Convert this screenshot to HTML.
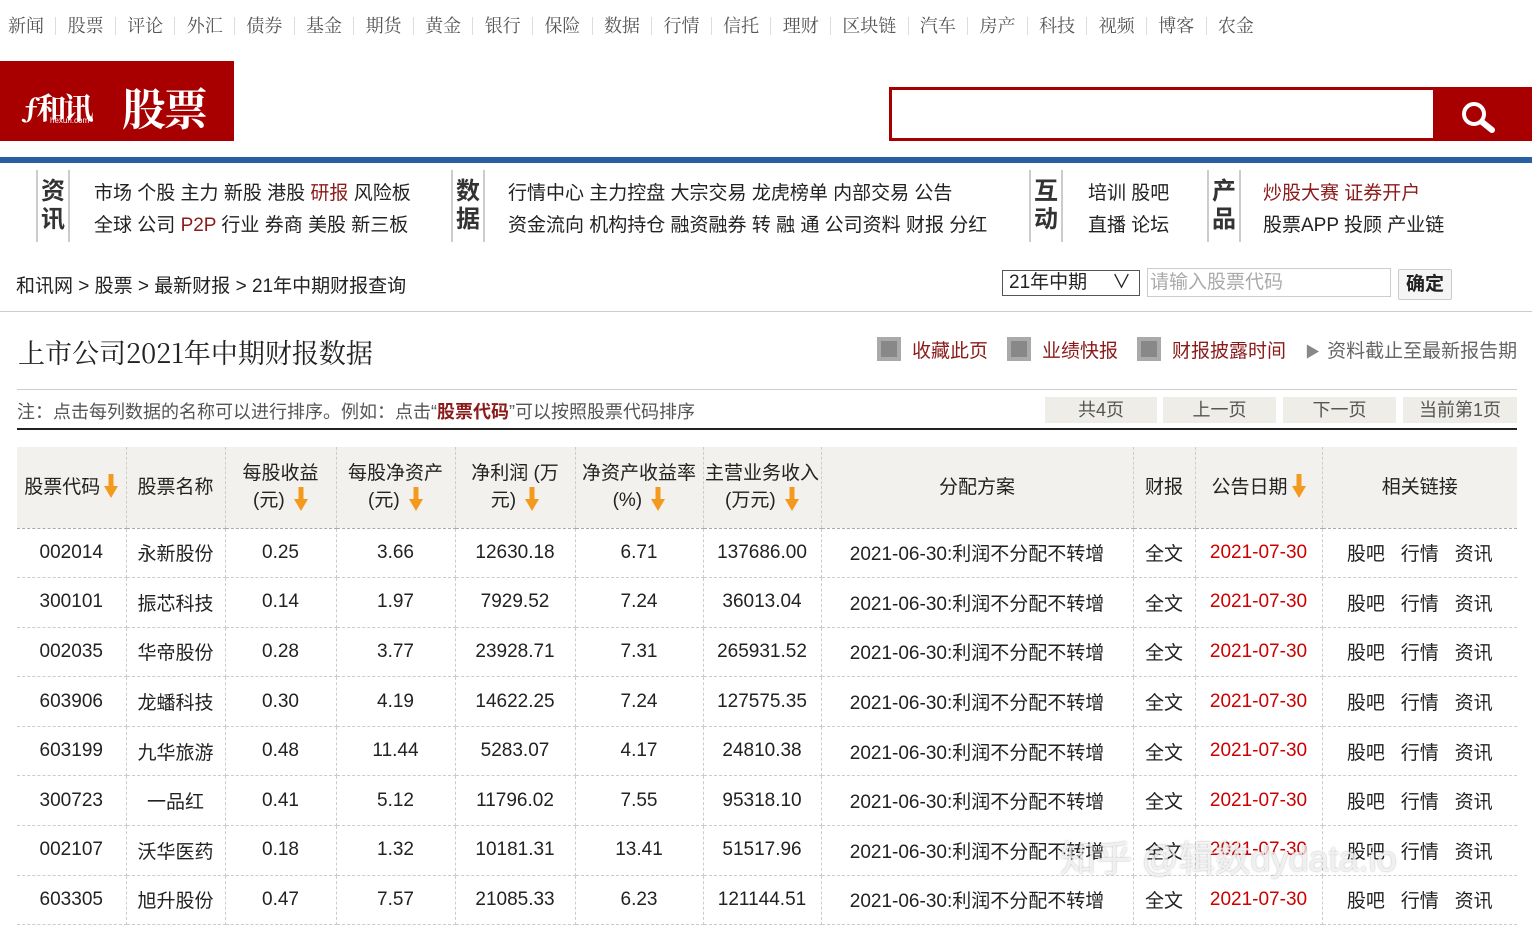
<!DOCTYPE html>
<html><head><meta charset="utf-8"><style>
*{margin:0;padding:0;box-sizing:border-box}
body{width:1532px;height:924px;overflow:hidden;background:#fff;font-family:"Liberation Sans","Noto Sans CJK SC",sans-serif;color:#222;position:relative}
.a{position:absolute;white-space:nowrap}
.nav{top:14px;left:8px;font-family:"Liberation Serif","Noto Serif CJK SC",serif;font-size:18px;color:#555;line-height:24px}
.nav span{display:inline-block}
.nav i{display:inline-block;width:1px;height:18px;background:#ddd;margin:0 11.3px;vertical-align:-3px}
.sec{font-size:19px;line-height:32px;color:#222}
.lab{font-size:24px;font-weight:bold;line-height:28px;color:#333;width:34px;text-align:center;border-left:2px solid #ccc;border-right:2px solid #ccc;height:72px;padding-top:8px}
.red{color:#8b1a1a}
table{border-collapse:collapse;position:absolute;left:17px;top:447px;width:1500px;font-size:19px}
td{border:1px dashed #ccc;text-align:center;height:49.6px;padding:0}
tr:first-child td{border-top:none}
td:first-child{border-left:none}td:last-child{border-right:none}
th{background:#f3f1ed;font-weight:normal;height:81px;border-left:1px dashed #ccc;border-bottom:1px dashed #aaa;line-height:27px;color:#222;font-size:19px}
th:first-child{border-left:none}
.ar{display:inline-block;width:14px;height:24px;vertical-align:-5px;margin-left:4px}
.dt{color:#c00}
.pg{background:#efede8;color:#555;font-size:18px;height:26px;line-height:26px;text-align:center;top:397px}
.ic{display:inline-block;width:24px;height:24px;background:#888;border:4px solid #aaa;vertical-align:-4px;margin-right:11px}
</style></head><body>
<svg width="0" height="0" style="position:absolute"><defs><symbol id="ar" viewBox="0 0 14 24"><rect x="4.5" y="0" width="5" height="14" fill="#f39a1e"/><path d="M0 12 L14 12 L7 24 Z" fill="#f39a1e"/></symbol></defs></svg>
<div class="a nav"><span>新闻</span><i></i><span>股票</span><i></i><span>评论</span><i></i><span>外汇</span><i></i><span>债券</span><i></i><span>基金</span><i></i><span>期货</span><i></i><span>黄金</span><i></i><span>银行</span><i></i><span>保险</span><i></i><span>数据</span><i></i><span>行情</span><i></i><span>信托</span><i></i><span>理财</span><i></i><span>区块链</span><i></i><span>汽车</span><i></i><span>房产</span><i></i><span>科技</span><i></i><span>视频</span><i></i><span>博客</span><i></i><span>农金</span></div>
<div class="a" style="left:0;top:61px;width:234px;height:80px;background:#a80000"></div>
<div class="a" style="left:22px;top:84px;color:#fff;font-size:30px;font-weight:bold;font-family:'Noto Serif CJK SC',serif;letter-spacing:-3px">ƒ和讯</div>
<div class="a" style="left:50px;top:116px;color:#fff;font-size:8px">hexun.com</div>
<div class="a" style="left:122px;top:74px;color:#fff;font-size:44px;font-weight:bold;font-family:'Noto Serif CJK SC',serif;letter-spacing:-2px">股票</div>
<div class="a" style="left:889px;top:87px;width:643px;height:54px;border:3px solid #a80000;border-right:none"></div>
<div class="a" style="left:1433px;top:87px;width:99px;height:54px;background:#a80000;border-radius:2px"></div>
<svg class="a" style="left:1460px;top:100px" width="44" height="36"><circle cx="14" cy="14" r="10" stroke="#fff" stroke-width="4" fill="none"/><line x1="22" y1="22" x2="32" y2="30" stroke="#fff" stroke-width="6" stroke-linecap="round"/></svg>
<div class="a" style="left:0;top:157px;width:1532px;height:6px;background:#2a5fa5"></div>
<div class="a lab" style="left:36px;top:170px">资<br>讯</div>
<div class="a sec" style="left:94px;top:178px">市场 个股 主力 新股 港股 <span class="red">研报</span> 风险板<br>全球 公司 <span class="red">P2P</span> 行业 券商 美股 新三板</div>
<div class="a lab" style="left:451px;top:170px">数<br>据</div>
<div class="a sec" style="left:508px;top:178px">行情中心 主力控盘 大宗交易 龙虎榜单 内部交易 公告<br>资金流向 机构持仓 融资融券 转 融 通 公司资料 财报 分红</div>
<div class="a lab" style="left:1029px;top:170px">互<br>动</div>
<div class="a sec" style="left:1088px;top:178px">培训 股吧<br>直播 论坛</div>
<div class="a lab" style="left:1207px;top:170px">产<br>品</div>
<div class="a sec" style="left:1263px;top:178px"><span class="red">炒股大赛 证券开户</span><br>股票APP 投顾 产业链</div>
<div class="a" style="left:16px;top:271px;font-size:19px">和讯网 &gt; 股票 &gt; 最新财报 &gt; 21年中期财报查询</div>
<div class="a" style="left:1002px;top:270px;width:138px;height:26px;border:1px solid #555;font-size:19px;line-height:24px;padding-left:6px">21年中期<span style="position:absolute;right:8px;top:0">∨</span></div>
<div class="a" style="left:1147px;top:268px;width:244px;height:29px;border:1px solid #ccc;font-size:19px;color:#aaa;line-height:27px;padding-left:2px">请输入股票代码</div>
<div class="a" style="left:1398px;top:269px;width:54px;height:31px;border:1px solid #ccc;background:#f5f5f5;font-size:19px;font-weight:bold;text-align:center;line-height:29px;border-radius:2px">确定</div>
<div class="a" style="left:0;top:311px;width:1532px;height:1px;background:#ccc"></div>
<div class="a" style="left:18px;top:332px;font-size:27px;font-family:'Noto Serif CJK SC','Liberation Serif',serif;color:#222">上市公司2021年中期财报数据</div>
<div class="a" style="left:877px;top:336px;font-size:19px;color:#8b1a1a"><span class="ic"></span>收藏此页<span class="ic" style="margin-left:19px"></span>业绩快报<span class="ic" style="margin-left:19px"></span>财报披露时间<span style="color:#888;margin:0 7px 0 19px;font-size:15px">▶</span><span style="color:#666">资料截止至最新报告期</span></div>
<div class="a" style="left:17px;top:389px;width:1500px;height:1px;background:#ccc"></div>
<div class="a" style="left:17px;top:398px;font-size:18px;color:#555">注：点击每列数据的名称可以进行排序。例如：点击“<b style="color:#8b1a1a">股票代码</b>”可以按照股票代码排序</div>
<div class="a pg" style="left:1045px;width:112px">共4页</div>
<div class="a pg" style="left:1163px;width:113px">上一页</div>
<div class="a pg" style="left:1283px;width:113px">下一页</div>
<div class="a pg" style="left:1403px;width:114px">当前第1页</div>
<div class="a" style="left:17px;top:428px;width:1500px;height:2px;background:#222"></div>
<table>
<colgroup><col style="width:109px"><col style="width:99px"><col style="width:111px"><col style="width:119px"><col style="width:120px"><col style="width:128px"><col style="width:118px"><col style="width:312px"><col style="width:62px"><col style="width:127px"><col style="width:195px"></colgroup>
<tr><th>股票代码<svg class="ar"><use href="#ar"/></svg></th><th>股票名称</th><th>每股收益<br>(元) <svg class="ar"><use href="#ar"/></svg></th><th>每股净资产<br>(元) <svg class="ar"><use href="#ar"/></svg></th><th>净利润 (万<br>元) <svg class="ar"><use href="#ar"/></svg></th><th>净资产收益率<br>(%) <svg class="ar"><use href="#ar"/></svg></th><th>主营业务收入<br>(万元) <svg class="ar"><use href="#ar"/></svg></th><th>分配方案</th><th>财报</th><th>公告日期<svg class="ar"><use href="#ar"/></svg></th><th>相关链接</th></tr>
<tr><td>002014</td><td>永新股份</td><td>0.25</td><td>3.66</td><td>12630.18</td><td>6.71</td><td>137686.00</td><td>2021-06-30:利润不分配不转增</td><td>全文</td><td class="dt">2021-07-30</td><td>股吧 &nbsp; 行情 &nbsp; 资讯</td></tr>
<tr><td>300101</td><td>振芯科技</td><td>0.14</td><td>1.97</td><td>7929.52</td><td>7.24</td><td>36013.04</td><td>2021-06-30:利润不分配不转增</td><td>全文</td><td class="dt">2021-07-30</td><td>股吧 &nbsp; 行情 &nbsp; 资讯</td></tr>
<tr><td>002035</td><td>华帝股份</td><td>0.28</td><td>3.77</td><td>23928.71</td><td>7.31</td><td>265931.52</td><td>2021-06-30:利润不分配不转增</td><td>全文</td><td class="dt">2021-07-30</td><td>股吧 &nbsp; 行情 &nbsp; 资讯</td></tr>
<tr><td>603906</td><td>龙蟠科技</td><td>0.30</td><td>4.19</td><td>14622.25</td><td>7.24</td><td>127575.35</td><td>2021-06-30:利润不分配不转增</td><td>全文</td><td class="dt">2021-07-30</td><td>股吧 &nbsp; 行情 &nbsp; 资讯</td></tr>
<tr><td>603199</td><td>九华旅游</td><td>0.48</td><td>11.44</td><td>5283.07</td><td>4.17</td><td>24810.38</td><td>2021-06-30:利润不分配不转增</td><td>全文</td><td class="dt">2021-07-30</td><td>股吧 &nbsp; 行情 &nbsp; 资讯</td></tr>
<tr><td>300723</td><td>一品红</td><td>0.41</td><td>5.12</td><td>11796.02</td><td>7.55</td><td>95318.10</td><td>2021-06-30:利润不分配不转增</td><td>全文</td><td class="dt">2021-07-30</td><td>股吧 &nbsp; 行情 &nbsp; 资讯</td></tr>
<tr><td>002107</td><td>沃华医药</td><td>0.18</td><td>1.32</td><td>10181.31</td><td>13.41</td><td>51517.96</td><td>2021-06-30:利润不分配不转增</td><td>全文</td><td class="dt">2021-07-30</td><td>股吧 &nbsp; 行情 &nbsp; 资讯</td></tr>
<tr><td>603305</td><td>旭升股份</td><td>0.47</td><td>7.57</td><td>21085.33</td><td>6.23</td><td>121144.51</td><td>2021-06-30:利润不分配不转增</td><td>全文</td><td class="dt">2021-07-30</td><td>股吧 &nbsp; 行情 &nbsp; 资讯</td></tr>
</table>
<div class="a" style="left:1060px;top:830px;font-size:36px;color:rgba(255,255,255,.75);text-shadow:0 0 2px rgba(0,0,0,.3)">知乎 @辑数dydata.io</div>
</body></html>
